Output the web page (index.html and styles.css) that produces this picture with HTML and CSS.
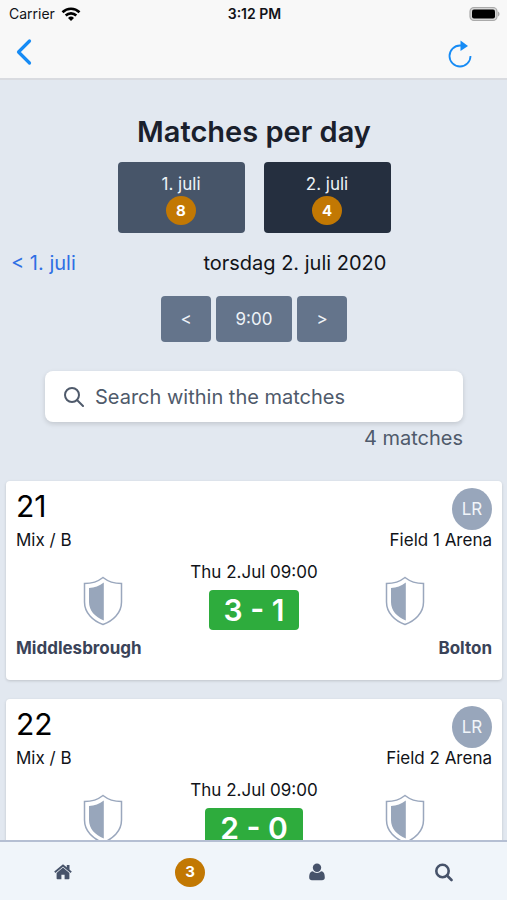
FILE: index.html
```html
<!DOCTYPE html>
<html lang="en">
<head>
<meta charset="utf-8">
<meta name="viewport" content="width=device-width, initial-scale=1">
<title>Matches per day</title>
<link rel="stylesheet" href="styles.css">
</head>
<body>
<svg class="defs" aria-hidden="true">
  <symbol id="shield" viewBox="0 0 40 50">
    <path d="M20 1.500C15 5.500 8.500 7.500 1.500 7.500V26C1.500 37 10 45 20 48.500C30 45 38.500 37 38.500 26V7.500C31.500 7.500 25 5.500 20 1.500Z" fill="none" stroke="#9aa7bd" stroke-width="1.500"/>
    <path d="M20.800 6.500C16.500 10 11.500 11.500 6 12V26C6 34.500 12 41 20.800 44.500Z" fill="#98a6bb"/>
  </symbol>
</svg>
<header class="topbar">
  <div class="status">
    <span class="carrier">Carrier
      <svg width="20" height="14" viewBox="0 0 20 14" aria-hidden="true"><g fill="none" stroke="#000" stroke-width="2.600"><path d="M1.500 5.200a12.200 12.200 0 0 1 17 0"/><path d="M4.700 8.500a7.600 7.600 0 0 1 10.600 0"/></g><path d="M10 14L7 11a4.300 4.300 0 0 1 6 0z"/></svg>
    </span>
    <strong class="clock">3:12 PM</strong>
    <svg class="battery" width="31" height="16" viewBox="0 0 31 16" aria-hidden="true"><rect x="1" y="1.500" width="27" height="13" rx="4" fill="#d6d6d6" stroke="#aaa" stroke-width="1.200"/><rect x="3" y="3.500" width="23" height="9" rx="2"/><path d="M29 5.500c2 .8 2 4.200 0 5z" fill="#aaa"/></svg>
  </div>
  <div class="toolbar">
    <button class="tool" aria-label="Back"><svg width="16" height="28" viewBox="0 0 16 28"><path d="M13.500 3L2.500 14l11 11" fill="none" stroke="#168bf5" stroke-width="3.200" stroke-linecap="round" stroke-linejoin="round"/></svg></button>
    <button class="tool" aria-label="Reload"><svg width="24" height="30" viewBox="0 0 24 30"><path d="M22.500 18A10.500 10.500 0 1 1 12 7.500h2" fill="none" stroke="#168bf5" stroke-width="1.800"/><path d="M12.500 2.500V13L20 8z" fill="#168bf5"/></svg></button>
  </div>
</header>
<main class="content">
  <h1>Matches per day</h1>
  <nav class="days" aria-label="Days">
    <button class="day">1. juli<span class="badge">8</span></button>
    <button class="day selected">2. juli<span class="badge">4</span></button>
  </nav>
  <div class="date-row">
    <a href="#previous">&lt; 1. juli</a>
    <span class="date">torsdag 2. juli 2020</span>
  </div>
  <div class="times">
    <button aria-label="Earlier">&lt;</button>
    <button class="time">9:00</button>
    <button aria-label="Later">&gt;</button>
  </div>
  <div class="search-area">
    <label class="search">
      <svg width="20" height="20" viewBox="0 0 20 20" aria-hidden="true"><g fill="none" stroke="#4f5a6b" stroke-width="2"><circle cx="8" cy="8" r="7"/><path d="M13 13l6 6" stroke-linecap="round"/></g></svg>
      <input type="search" placeholder="Search within the matches" aria-label="Search within the matches">
    </label>
    <p class="count">4 matches</p>
  </div>
  <article class="card">
    <div class="card-top"><h2>21</h2><span class="avatar">LR</span></div>
    <div class="place"><span>Mix / B</span><span>Field 1 Arena</span></div>
    <div class="match">
      <svg class="shield" aria-hidden="true"><use href="#shield"/></svg>
      <div class="result"><span>Thu 2.Jul 09:00</span><strong class="score">3 - 1</strong></div>
      <svg class="shield" aria-hidden="true"><use href="#shield"/></svg>
    </div>
    <div class="teams"><span>Middlesbrough</span><span>Bolton</span></div>
  </article>
  <article class="card">
    <div class="card-top"><h2>22</h2><span class="avatar">LR</span></div>
    <div class="place"><span>Mix / B</span><span>Field 2 Arena</span></div>
    <div class="match">
      <svg class="shield" aria-hidden="true"><use href="#shield"/></svg>
      <div class="result"><span>Thu 2.Jul 09:00</span><strong class="score">2 - 0</strong></div>
      <svg class="shield" aria-hidden="true"><use href="#shield"/></svg>
    </div>
  </article>
</main>
<nav class="tabbar" aria-label="Main">
  <a href="#home" aria-label="Home"><svg width="18" height="16" viewBox="0 0 18 16"><path d="M9 3.600L2.600 9V14.500c0 .5.300.8.800.8h4v-4.500h3.200v4.500h4c.5 0 .8-.3.800-.8V9z" fill="#47536a"/><path d="M.8 8.300L9 1.500 17.200 8.300" fill="none" stroke="#47536a" stroke-width="1.800"/><path d="M12.800 1h2.700v5L12.800 4z" fill="#47536a"/></svg></a>
  <a href="#matches" aria-label="Matches, 3"><span class="badge">3</span></a>
  <a href="#profile" aria-label="Profile"><svg width="16" height="18" viewBox="0 0 16 18"><g fill="#47536a"><circle cx="8" cy="4.700" r="4.200"/><path d="M3.800 8.300C1.200 8.500.2 11 .2 14.500.2 16.200 1.300 17.300 3 17.300h10c1.700 0 2.800-1.100 2.800-2.800 0-3.500-1-6-3.600-6.200a6 6 0 0 1-8.400 0z"/></g></svg></a>
  <a href="#search" aria-label="Search"><svg width="18" height="19" viewBox="0 0 18 19"><g fill="none" stroke="#47536a" stroke-width="2.600"><circle cx="7.500" cy="8" r="6.200"/><path d="M12 12.500l4.500 4.500" stroke-linecap="round"/></g></svg></a>
</nav>
</body>
</html>
```
FILE: styles.css
```css
* { box-sizing: border-box; }
body {
  margin: 0;
  height: 100vh;
  display: flex;
  flex-direction: column;
  background: #e2e8f0;
  color: #111318;
  font: 17px/24px Inter, "Liberation Sans", sans-serif;
}
button { border: 0; padding: 0; font: inherit; color: inherit; background: none; }
a { text-decoration: none; }
svg { display: block; flex: none; }
.defs { position: absolute; width: 0; height: 0; }

.topbar { flex: none; background: #f8f8f8; border-bottom: 2px solid #d9dbe0; }
.status {
  display: grid;
  grid-template-columns: 1fr auto 1fr;
  align-items: center;
  height: 28px;
  padding: 0 7px 0 9px;
  font-size: 14px;
}
.carrier { display: flex; align-items: center; gap: 6px; }
.clock { font-weight: 600; }
.battery { justify-self: end; }
.toolbar { display: flex; justify-content: space-between; height: 50px; padding: 10px 35px 10px 16px; }
.tool { display: flex; }

.content { flex: 1; min-height: 0; overflow: hidden; padding: 32px 5px 0 6px; }
h1 { margin: 0 0 10px; font-size: 29px; line-height: 40px; font-weight: 600; text-align: center; color: #1a202c; }
.days { display: flex; justify-content: center; gap: 19px; }
.day {
  display: flex;
  flex-direction: column;
  align-items: center;
  width: 127px;
  padding: 10px 0 8px;
  border-radius: 4px;
  background: #475569;
  color: #edf2f7;
}
.day.selected { background: #252f3f; }
.badge {
  display: flex;
  align-items: center;
  justify-content: center;
  width: 30px;
  height: 29px;
  border-radius: 50%;
  background: #c27803;
  color: #fff;
  font-size: 15px;
  font-weight: 700;
}
.date-row { display: flex; gap: 12px; margin: 15px 0 0; padding-left: 5px; font-size: 20px; line-height: 30px; }
.date-row a { color: #2f6fe4; }
.date { flex: 1; text-align: center; }
.times { display: flex; justify-content: center; gap: 5px; margin-top: 18px; }
.times button { width: 50px; height: 46px; border-radius: 4px; background: #64748b; color: #edf2f7; }
.times .time { width: 76px; }
.search-area { margin: 29px 39px 30px; color: #4f5a6b; font-size: 20px; }
.search {
  display: flex;
  align-items: center;
  gap: 11px;
  height: 51px;
  padding: 0 19px;
  border-radius: 8px;
  background: #fff;
  box-shadow: 0 2px 5px rgba(0, 0, 0, .14);
}
.search input { flex: 1; min-width: 0; border: 0; padding: 0; outline: 0; font: inherit; background: none; }
.search input::placeholder { color: #4f5a6b; opacity: 1; }
.count { margin: 3px 0 0; text-align: right; line-height: 26px; }

.card {
  margin-bottom: 19px;
  padding: 7px 10px 20px;
  border-radius: 4px;
  background: #fff;
  box-shadow: 0 1px 3px rgba(0, 0, 0, .16);
}
.card-top, .place, .teams { display: flex; justify-content: space-between; }
h2 { margin: 0; font-size: 30px; line-height: 36px; font-weight: 400; color: #000; }
.avatar {
  display: flex;
  align-items: center;
  justify-content: center;
  width: 40px;
  height: 42px;
  border-radius: 50%;
  background: #98a6bb;
  color: #f1f5f9;
}
.place { line-height: 20px; }
.match { display: grid; grid-template-columns: 1fr auto 1fr; align-items: end; margin-top: 10px; }
.shield { width: 40px; height: 50px; margin-bottom: 4px; justify-self: center; }
.result { display: flex; flex-direction: column; align-items: center; gap: 6px; }
.score {
  padding: 2px 15px;
  border-radius: 4px;
  background: #2eac3d;
  color: #fff;
  font-size: 30px;
  line-height: 36px;
  font-weight: 600;
}
.teams { margin-top: 6px; font-weight: 700; color: #3a4358; }

.tabbar {
  flex: none;
  display: grid;
  grid-template-columns: repeat(4, 1fr);
  height: 60px;
  padding-top: 2px;
  border-top: 2px solid #b5bfd3;
  background: #f0f5fa;
}
.tabbar a { display: flex; align-items: center; justify-content: center; }
```
